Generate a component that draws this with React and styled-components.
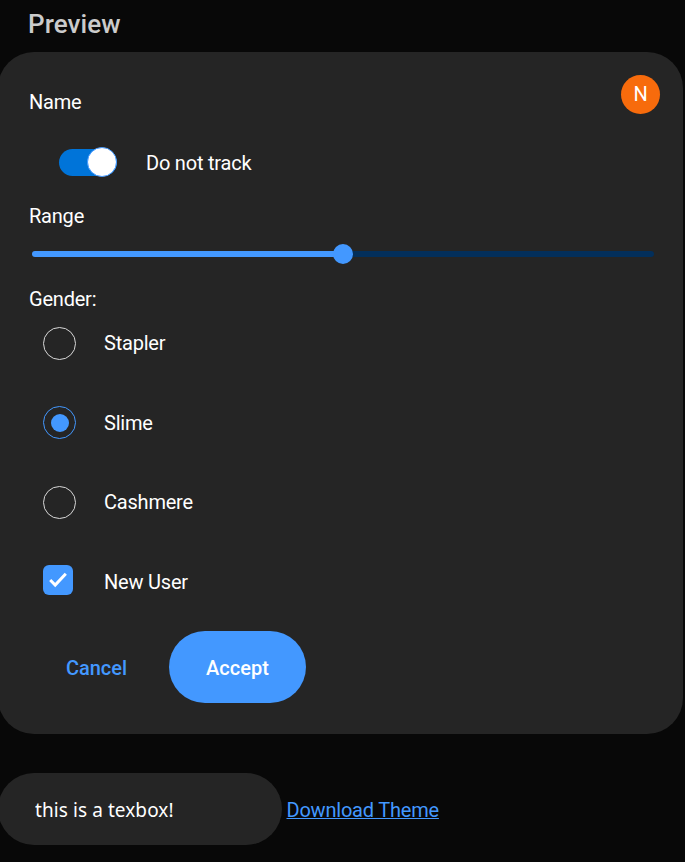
import React from "react";
import styled, { createGlobalStyle } from "styled-components";

const GlobalStyle = createGlobalStyle`
  *, *::before, *::after { box-sizing: border-box; }
  body {
    margin: 0;
    background: #080808;
    color: #fff;
    font: 400 20px/24px Roboto, "Liberation Sans", sans-serif;
    letter-spacing: -0.21px;
    overflow: hidden;
  }
`;

const Page = styled.main`
  width: 685px;
  height: 862px;
  margin-left: -2px;
`;

const Heading = styled.h2`
  margin: 0;
  height: 52px;
  padding: 9px 0 0 30px;
  font-size: 26px;
  line-height: 30px;
  font-weight: 500;
  letter-spacing: 0.1px;
  color: #cbcbcb;
`;

const Card = styled.section`
  width: 685px;
  height: 682px;
  padding: 23px 23px 0 31px;
  border-radius: 36px;
  background: #252525;
`;

const Header = styled.div`
  display: flex;
  justify-content: space-between;
  height: 72px;
`;

const Name = styled.span`
  margin-top: 15px;
`;

const Avatar = styled.div`
  width: 39px;
  height: 39px;
  border-radius: 50%;
  background: #f76b0c;
  text-align: center;
  line-height: 39px;
`;

const ToggleRow = styled.label`
  display: flex;
  align-items: flex-start;
  height: 57px;
  padding-left: 30px;
`;

const Toggle = styled.span`
  display: flex;
  justify-content: flex-end;
  align-items: flex-end;
  width: 58px;
  height: 27px;
  margin: 2px 29px 0 0;
  border-radius: 14px;
  background: #0074d9;
`;

const ToggleThumb = styled.span`
  flex: none;
  width: 30px;
  height: 30px;
  margin-bottom: -1px;
  border: 1px solid #4398ff;
  border-radius: 50%;
  background: #fff;
`;

const ToggleText = styled.span`
  margin-top: 4px;
`;

const FieldLabel = styled.div`
  height: ${(p) => p.$height}px;
`;

const Slider = styled.div`
  display: flex;
  align-items: center;
  width: 622px;
  height: 20px;
  margin: 0 0 23px 3px;
`;

const Track = styled.span`
  flex: ${(p) => (p.$filled ? "0 0 302px" : "1")};
  height: 6px;
  border-radius: ${(p) => (p.$filled ? "3px 0 0 3px" : "0 3px 3px 0")};
  margin: ${(p) => (p.$filled ? "0 -1px 0 0" : "0 0 0 -1px")};
  background: ${(p) => (p.$filled ? "#4398ff" : "#032f5b")};
`;

const SliderThumb = styled.span`
  z-index: 1;
  width: 20px;
  height: 20px;
  border-radius: 50%;
  background: #4398ff;
`;

const Options = styled.div`
  display: grid;
  grid-template-rows: 79px 80px 79px 77px;
  height: 315px;
  padding-left: 14px;
`;

const Option = styled.label`
  display: grid;
  grid-template-columns: 61px 1fr;
  align-items: start;
`;

const OptionText = styled.span`
  margin-top: ${(p) => p.$top}px;
`;

const Radio = styled.span`
  display: grid;
  place-items: center;
  width: 33px;
  height: 33px;
  border: 1px solid ${(p) => (p.$checked ? "#4398ff" : "#d8d8d8")};
  border-radius: 50%;
`;

const Dot = styled.span`
  width: 18px;
  height: 18px;
  border-radius: 50%;
  background: #4398ff;
`;

const Checkbox = styled.span`
  display: block;
  width: 30px;
  height: 30px;
  border-radius: 6px;
  background: #4398ff;

  svg { display: block; }
`;

const Actions = styled.div`
  display: flex;
  align-items: center;
  gap: 5px;
  height: 72px;
  margin-top: -11px;
`;

const Button = styled.button`
  width: ${(p) => (p.$primary ? 137 : 135)}px;
  height: 72px;
  padding: 2px 0 0;
  border: 0;
  border-radius: 36px;
  background: ${(p) => (p.$primary ? "#4398ff" : "transparent")};
  color: ${(p) => (p.$primary ? "#fff" : "#4398ff")};
  font: 500 20px/24px Roboto, "Liberation Sans", sans-serif;
  letter-spacing: 0;
`;

const Footer = styled.div`
  display: flex;
  margin-top: 39px;
`;

const TextBox = styled.input`
  width: 284px;
  height: 72px;
  padding: 2px 37px 0;
  border: 0;
  border-radius: 36px;
  outline: 0;
  background: #252525;
  color: #fff;
  font: 400 19px/24px "Noto Sans", "DejaVu Sans", sans-serif;
  letter-spacing: 0.08px;
`;

const Download = styled.a`
  margin: 25px 0 0 4.5px;
  color: #4398ff;
  text-decoration: underline;
  text-decoration-thickness: 1px;
`;

const radios = [
  { label: "Stapler", top: 4 },
  { label: "Slime", top: 5, checked: true },
  { label: "Cashmere", top: 4 },
];

export default function App() {
  return (
    <>
      <GlobalStyle />
      <Page>
        <Heading>Preview</Heading>
        <Card>
          <Header>
            <Name>Name</Name>
            <Avatar>N</Avatar>
          </Header>
          <ToggleRow>
            <Toggle>
              <ToggleThumb />
            </Toggle>
            <ToggleText>Do not track</ToggleText>
          </ToggleRow>
          <FieldLabel $height={40}>Range</FieldLabel>
          <Slider>
            <Track $filled />
            <SliderThumb />
            <Track />
          </Slider>
          <FieldLabel $height={40}>Gender:</FieldLabel>
          <Options>
            {radios.map((r) => (
              <Option key={r.label}>
                <Radio $checked={r.checked}>{r.checked && <Dot />}</Radio>
                <OptionText $top={r.top}>{r.label}</OptionText>
              </Option>
            ))}
            <Option>
              <Checkbox>
                <svg width="30" height="30" viewBox="0 0 30 30" fill="none">
                  <path d="M7.2 15l5 5L22.8 8.8" stroke="#fff" strokeWidth="3" />
                </svg>
              </Checkbox>
              <OptionText $top={5}>New User</OptionText>
            </Option>
          </Options>
          <Actions>
            <Button>Cancel</Button>
            <Button $primary>Accept</Button>
          </Actions>
        </Card>
        <Footer>
          <TextBox defaultValue="this is a texbox!" />
          <Download href="#">Download Theme</Download>
        </Footer>
      </Page>
    </>
  );
}
